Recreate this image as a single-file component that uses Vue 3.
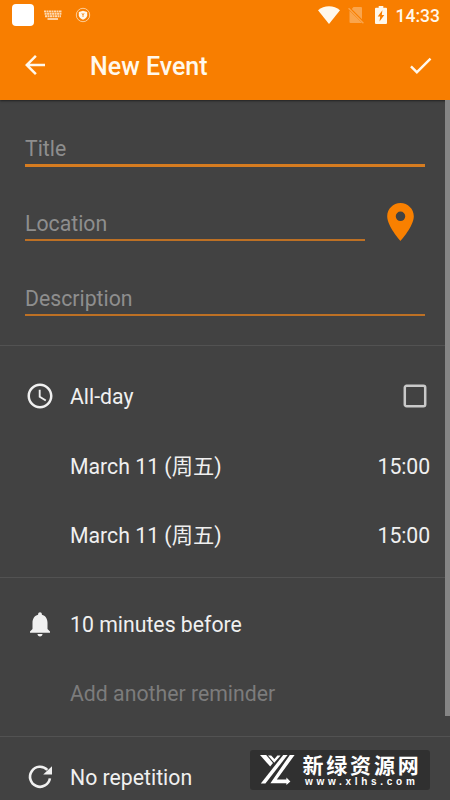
<script setup>
const fields = [
  { label: 'Title', focused: true },
  { label: 'Location', pin: true },
  { label: 'Description' },
]
const dates = [
  { day: 'March 11 (周五)', time: '15:00' },
  { day: 'March 11 (周五)', time: '15:00' },
]
</script>

<template>
  <div class="screen">
    <header class="top">
      <div class="status">
        <span class="app-square"></span>
        <svg class="keyboard" viewBox="0 0 18 11">
          <path d="M0 1.4H18M.6 3.8H17.4M1 6.2H17" stroke="currentColor" stroke-width="1.9" stroke-dasharray="2 .5" fill="none" />
          <path d="M3.5 9H14" stroke="currentColor" stroke-width="1.8" />
        </svg>
        <svg class="shield" viewBox="0 0 16 16">
          <circle cx="8" cy="8" r="6.7" fill="none" stroke="currentColor" stroke-width=".9" opacity=".7" />
          <path d="M8 3.8 12.2 4.9V8.2C12.2 10.5 10 12 8 12.8 6 12 3.8 10.5 3.8 8.2V4.9Z" fill="currentColor" />
          <path d="M6.9 6.2 8 8 9.1 6.2M8 8v2" fill="none" stroke="#f87e00" stroke-width=".8" />
        </svg>
        <span class="grow"></span>
        <svg class="wifi" viewBox="0 0 22 18"><path d="M0 4.3C6-1.2 16-1.2 22 4.3L11 18Z" fill="currentColor" /></svg>
        <svg class="nosim" viewBox="0 0 16 18">
          <path d="M5.5 1H13Q14 1 14 2V13.2L3.8 3Z" fill="currentColor" />
          <path d="M1.5 4.8 14 17H2.5Q1.5 17 1.5 16Z" fill="currentColor" />
          <path d="M.6 2.2 15.4 17.2" stroke="currentColor" stroke-width="1.3" />
        </svg>
        <svg class="battery" viewBox="0 0 12 18">
          <path fill-rule="evenodd" d="M3.7 0H8.3V1.8H11Q12 1.8 12 2.8V17Q12 18 11 18H1Q0 18 0 17V2.8Q0 1.8 1 1.8H3.7ZM7.4 4.2 2.7 10.6H5.2L4.5 15.4 9.3 8.9H6.8Z" fill="currentColor" />
        </svg>
        <span class="clock">14:33</span>
      </div>
      <div class="bar">
        <svg class="back" viewBox="0 0 24 24"><path d="M20 11H7.83l5.59-5.59L12 4l-8 8 8 8 1.41-1.41L7.83 13H20z" fill="currentColor" /></svg>
        <h1>New Event</h1>
        <svg class="check" viewBox="0 0 24 24"><path d="M9 16.17 4.83 12l-1.42 1.41L9 19 21 7l-1.41-1.41z" fill="currentColor" /></svg>
      </div>
    </header>

    <main>
      <section class="form">
        <div v-for="f in fields" :key="f.label" class="field">
          <div class="input" :class="{ focused: f.focused }">{{ f.label }}</div>
          <svg v-if="f.pin" class="pin" viewBox="5 2 14 20"><path d="M12 2C8.13 2 5 5.13 5 9c0 5.25 7 13 7 13s7-7.75 7-13c0-3.87-3.13-7-7-7zm0 9.5a2.5 2.5 0 0 1 0-5 2.5 2.5 0 0 1 0 5z" fill="currentColor" /></svg>
        </div>
      </section>

      <section class="when">
        <div class="row">
          <svg class="icon" viewBox="0 0 24 24"><path d="M11.99 2C6.47 2 2 6.48 2 12s4.47 10 9.99 10C17.52 22 22 17.52 22 12S17.52 2 11.99 2zM12 20c-4.42 0-8-3.58-8-8s3.58-8 8-8 8 3.58 8 8-3.58 8-8 8zM12.5 7H11v6l5.25 3.15.75-1.23-4.5-2.67z" fill="currentColor" /></svg>
          <span class="label">All-day</span>
          <svg class="box" viewBox="0 0 24 24"><rect x="1.8" y="1.8" width="20.4" height="20.4" rx="1.8" fill="none" stroke="currentColor" stroke-width="2.5" /></svg>
        </div>
        <div v-for="(d, i) in dates" :key="i" class="row date">
          <span class="icon"></span>
          <span class="label">{{ d.day }}</span>
          <span class="time">{{ d.time }}</span>
        </div>
      </section>

      <section class="remind">
        <div class="row">
          <svg class="icon" viewBox="0 0 24 24"><path d="M12 22c1.1 0 2-.9 2-2h-4c0 1.1.89 2 2 2zm6-6v-5c0-3.07-1.64-5.64-4.5-6.32V4c0-.83-.67-1.5-1.5-1.5s-1.5.67-1.5 1.5v.68C7.63 5.36 6 7.92 6 11v5l-2 2v1h16v-1l-2-2z" fill="currentColor" /></svg>
          <span class="label">10 minutes before</span>
        </div>
        <div class="row">
          <span class="icon"></span>
          <span class="label faint">Add another reminder</span>
        </div>
      </section>

      <section class="repeat">
        <div class="row">
          <svg class="icon" viewBox="0 0 30 30">
            <path d="M24.9 16.4A10 10 0 1 1 22.3 7.9" fill="none" stroke="currentColor" stroke-width="2.6" />
            <path d="M27 4.2V12.4H18.2Z" fill="currentColor" />
          </svg>
          <span class="label">No repetition</span>
        </div>
      </section>
    </main>

    <div class="scrollbar"></div>

    <div class="badge">
      <svg class="mark" viewBox="0 0 36 30">
        <g fill="#fff">
          <path d="M0 0H6.2L13 8 10.2 11.6Z" />
          <path d="M8 .4H11.2L14.4 4 17.4.4H20.6L14.3 7.8Z" />
          <path d="M23.2 0H27.6L5.4 28.6H.8Z" />
          <path d="M29.8 0H34.6L16.8 24.6H26.4V22.4L30.4 26.4 26.4 30V28.2H10.4Z" />
        </g>
      </svg>
      <div class="words">
        <div class="site">新绿资源网</div>
        <div class="url">www.xlhs.com</div>
      </div>
    </div>
  </div>
</template>

<style>
body {
  margin: 0;
  background: #424242;
}
</style>

<style scoped>
.screen {
  position: relative;
  width: 450px;
  height: 800px;
  overflow: hidden;
  background: #424242;
  color: #f0f0f0;
  font-family: Roboto, "Noto Sans CJK SC", sans-serif;
  font-size: 21.25px;
  line-height: 30px;
}
svg {
  display: block;
  flex: none;
}
.top {
  height: 100px;
  background: #f87e00;
  color: #fff8ec;
  box-shadow: 0 1px 2px rgba(0, 0, 0, 0.5);
}
.status {
  display: flex;
  align-items: center;
  height: 30px;
  padding: 0 10px 0 12px;
}
.app-square {
  width: 21.5px;
  height: 21.5px;
  border-radius: 4px;
  background: #fff;
}
.keyboard {
  width: 18px;
  height: 11px;
  margin-left: 10.5px;
  opacity: 0.75;
}
.shield {
  width: 16px;
  height: 16px;
  margin-left: 12.5px;
}
.grow {
  flex: 1;
}
.wifi {
  width: 22px;
  height: 18px;
}
.nosim {
  width: 16px;
  height: 18px;
  margin-left: 8px;
  opacity: 0.32;
}
.battery {
  width: 12px;
  height: 18px;
  margin-left: 11px;
}
.clock {
  margin-left: 9px;
  padding-top: 2px;
  font-size: 17.5px;
  font-weight: 500;
}
.bar {
  display: flex;
  align-items: center;
  height: 70px;
  padding: 0 15px 0 20px;
}
.back {
  width: 30px;
  height: 30px;
}
h1 {
  flex: 1;
  margin: 3px 0 0 40px;
  font-size: 25px;
  font-weight: 500;
}
.check {
  width: 29px;
  height: 29px;
}
.form {
  height: 220px;
  padding: 25px 25px 0;
  border-bottom: 1px solid #525252;
}
.field {
  display: flex;
  height: 75px;
}
.input {
  flex: 1;
  height: 30px;
  padding-top: 9px;
  border-bottom: 2px solid #bd7024;
  color: #8e8e8e;
}
.input.focused {
  border-bottom: 3px solid #d67c20;
}
.pin {
  width: 27px;
  height: 38px;
  margin: 3px 11.5px 0 21.5px;
  color: #f98000;
}
.when {
  padding: 15px 0 9px;
  border-bottom: 1px solid #525252;
}
.remind {
  padding: 11px 0 9px;
  border-bottom: 1px solid #525252;
}
.repeat {
  padding-top: 5px;
}
.row {
  display: flex;
  align-items: center;
  box-sizing: border-box;
  height: 69px;
  padding: 0 20px 0 25px;
}
.row.date {
  padding-top: 2px;
}
.icon {
  width: 30px;
  height: 30px;
  margin-right: 15px;
}
.label {
  flex: 1;
  padding-top: 2px;
}
.time {
  padding-top: 2px;
  letter-spacing: -0.1px;
}
.faint {
  color: #7c7c7c;
}
.box {
  width: 24px;
  height: 24px;
  margin-right: 3px;
  color: #c9c9c9;
}
.scrollbar {
  position: absolute;
  top: 100px;
  right: 0;
  width: 5px;
  height: 616px;
  background: #858585;
}
.badge {
  position: absolute;
  left: 250px;
  top: 750px;
  display: flex;
  box-sizing: border-box;
  width: 180px;
  height: 40px;
  padding: 5px 0 0 10px;
  border-radius: 3px;
  background: #303030;
  color: #fff;
}
.mark {
  width: 36px;
  height: 30px;
}
.words {
  display: flex;
  flex-direction: column;
  gap: 1px;
  padding-top: 1px;
  margin-left: 6.5px;
  white-space: nowrap;
}
.site {
  font-family: "Liberation Sans", "Noto Sans CJK SC", sans-serif;
  font-size: 21px;
  font-weight: 700;
  line-height: 20px;
  letter-spacing: 2.8px;
}
.url {
  margin-left: 2.5px;
  font-family: "Liberation Sans", sans-serif;
  font-size: 10px;
  font-weight: 700;
  line-height: 10px;
  letter-spacing: 3.7px;
}
</style>
